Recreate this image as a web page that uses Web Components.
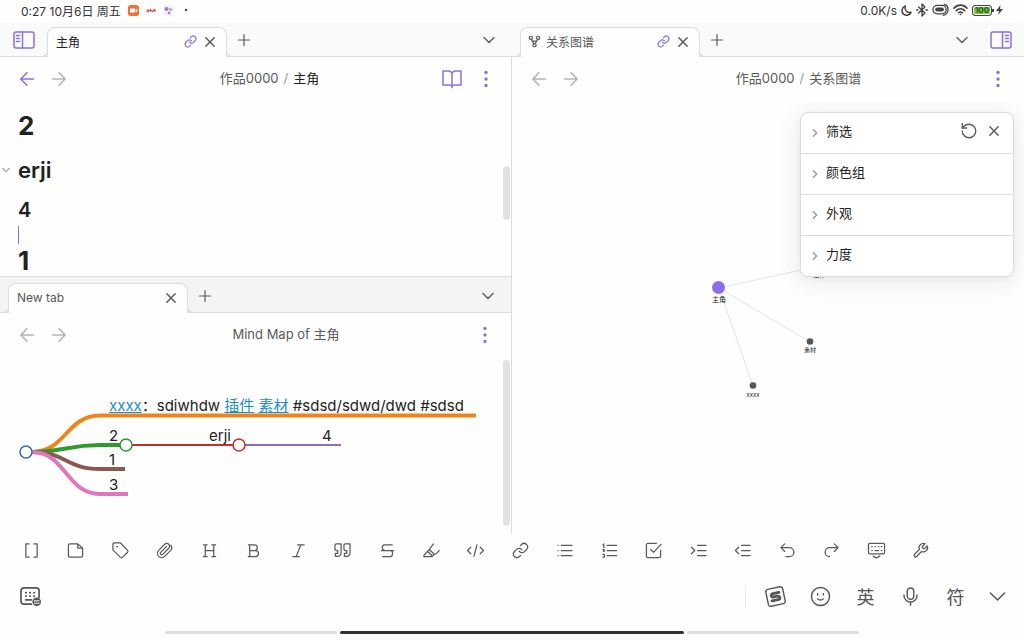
<!DOCTYPE html>
<html lang="zh-CN">
<head>
<meta charset="utf-8">
<title>主角</title>
<style>
  html, body { margin: 0; }
  body { font-family: Inter, "Noto Sans CJK SC", sans-serif; color: #222; background: #fefefe; }
</style>
</head>
<body>
<note-app></note-app>

<template id="t-note-app">
  <style>
    :host { display: flex; flex-direction: column; min-height: 100vh;
      --accent: #8b72dc; --muted: #5a5a5a; --faint: #b4b4b4; --line: #dcdcdc; --page: #fefefe; }
    main { flex: 1; display: grid; grid-template-columns: 1fr 1fr; }
    .left { display: grid; grid-template-rows: 254fr 257fr; border-right: 1px solid var(--line); box-sizing: border-box; min-width: 0; position: relative; }
    .right { display: flex; min-width: 0; }
    work-pane { min-width: 0; }
    .right work-pane { flex: 1; }
    .joined { margin-right: -1px; }
    .lower { border-top: 1px solid var(--line); --strip: #f4f4f4; --strip-height: 36px; }
  </style>
  <status-bar></status-bar>
  <main>
    <div class="left">
      <work-pane class="joined">
        <icon-button slot="start" icon="panelLeft" label="左侧边栏" style="--w:47px;--s:22px;--c:var(--accent);--k:1.5"></icon-button>
        <tab-card slot="tab" linked>主角</tab-card>
        <pane-header slot="header" back book><span>作品0000</span><i>/</i><b>主角</b></pane-header>
        <note-editor></note-editor>
      </work-pane>
      <work-pane class="lower">
        <tab-card slot="tab" style="margin-left:8px" plain>New tab</tab-card>
        <pane-header slot="header"><span>Mind Map of 主角</span></pane-header>
        <mind-map></mind-map>
      </work-pane>
    </div>
    <div class="right">
      <work-pane>
        <tab-card slot="tab" style="margin-left:8px" linked plain><ui-icon name="fork" style="--s:11px"></ui-icon>关系图谱</tab-card>
        <icon-button slot="end" icon="panelRight" label="右侧边栏" style="--w:46px;--s:22px;--c:var(--accent);--k:1.5"></icon-button>
        <pane-header slot="header"><span>作品0000</span><i>/</i><span>关系图谱</span></pane-header>
        <relation-graph></relation-graph>
      </work-pane>
    </div>
  </main>
  <format-toolbar></format-toolbar>
  <ime-bar></ime-bar>
  <gesture-bar></gesture-bar>
</template>

<template id="t-status-bar">
  <style>
    :host { display: flex; align-items: center; justify-content: space-between; height: 20px; padding: 0 21px 2px; font-size: 12px; color: #333; white-space: nowrap; --c: #444; }
    div { display: flex; align-items: center; }
    .battery { position: relative; box-sizing: border-box; width: 20px; height: 11px; border: 1px solid #444; border-radius: 3px; background: #7bc84a; font: 700 8px/9px Inter, sans-serif; text-align: center; box-shadow: inset 0 0 0 1px #fff; color: #245c10; }
    .battery::after { content: ""; position: absolute; right: -3px; top: 3px; width: 2px; height: 3px; background: #444; }
    .apps { gap: 7px; }
    .sys { gap: 4px; }
  </style>
  <div class="apps"><span>0:27 10月6日 周五</span>
    <ui-icon name="camera" style="--s:11px"></ui-icon><ui-icon name="redApp" style="--s:10px"></ui-icon><ui-icon name="dotsApp" style="--s:11px"></ui-icon><ui-icon name="dot" style="--s:8px"></ui-icon></div>
  <div class="sys"><span>0.0K/s</span>
    <ui-icon name="moon" style="--s:11px;--k:1.5"></ui-icon><ui-icon name="bluetooth" style="--s:12px;--k:1.3"></ui-icon><ui-icon name="pill" style="--s:17px;--k:1.3"></ui-icon><ui-icon name="wifi" style="--s:15px;--k:1.7"></ui-icon><span class="battery">100</span><ui-icon name="bolt" style="--s:7px"></ui-icon></div>
</template>

<template id="t-work-pane">
  <style>
    :host { display: flex; flex-direction: column; }
    .strip { display: flex; align-items: flex-end; height: var(--strip-height, 35px); box-sizing: border-box; background: var(--strip, #fafafa); box-shadow: inset 0 -1px var(--line); }
    .grow { flex: 1; }
    .strip icon-button { --h: 34px; }
    ::slotted(icon-button) { --h: 35px; }
    .body { flex: 1; display: grid; position: relative; }
  </style>
  <div class="strip">
    <slot name="start"></slot><slot name="tab"></slot>
    <icon-button icon="plus" label="新建标签页" style="--w:33px;--s:12px;--k:1.2"></icon-button>
    <span class="grow"></span>
    <icon-button icon="down" label="标签页列表" style="--w:32px;--s:12px;--k:1.4"></icon-button>
    <slot name="end"><span style="width:7px"></span></slot>
  </div>
  <slot name="header"></slot>
  <div class="body"><slot></slot></div>
</template>

<template id="t-tab-card">
  <style>
    :host { position: relative; display: flex; align-items: center; box-sizing: border-box; width: 180px; height: 30px; padding: 0 6px 2px 8px; border: 1px solid var(--line); border-bottom: 0; border-radius: 8px 8px 0 0; background: var(--page); font-size: 12px; color: #222; }
    :host([plain]) { color: var(--muted); }
    :host::before, :host::after { content: ""; position: absolute; bottom: 0; width: 6px; height: 6px; border: 1px solid var(--line); border-top: 0; box-sizing: border-box; background: var(--strip, #fafafa); clip-path: inset(0); }
    :host::before { left: -6px; border-left: 0; border-radius: 0 0 6px 0; }
    :host::after { right: -6px; border-right: 0; border-radius: 0 0 0 6px; }
    span { flex: 1; display: flex; align-items: center; gap: 6px; }
    .link { display: none; }
    :host([linked]) .link { display: block; }
    icon-button { --h: 28px; --w: 20px; }
  </style>
  <span><slot></slot></span>
  <icon-button class="link" icon="link" label="已关联" style="--s:13px;--c:var(--accent);--k:1.2"></icon-button>
  <icon-button icon="x" label="关闭" style="--s:10px;--k:1.5"></icon-button>
</template>

<template id="t-pane-header">
  <style>
    :host { display: flex; align-items: center; height: 44px; padding: 0 9px 0 11px; font-size: 13px; color: var(--muted); }
    nav { display: flex; width: 93px; --c: var(--faint); }
    :host([back]) .back { --c: var(--accent); }
    .title { flex: 1; display: flex; align-items: baseline; justify-content: center; gap: 5px; padding-bottom: 3px; white-space: nowrap; }
    ::slotted(i) { color: #999; font-style: normal; }
    ::slotted(b) { color: #222; font-weight: 400; }
    .act { --w: 34px; --c: var(--accent); }
    .book { display: none; }
    :host([book]) .book { display: block; }
  </style>
  <nav><icon-button class="back" icon="back" label="后退" style="--s:14px;--k:1.6"></icon-button><icon-button icon="forward" label="前进" style="--s:14px;--k:1.6"></icon-button></nav>
  <div class="title"><slot></slot></div>
  <icon-button class="act book" icon="book" label="阅读视图" style="--s:20px;--k:1.5"></icon-button>
  <icon-button class="act" icon="more" label="更多选项" style="--s:4px"></icon-button>
</template>

<template id="t-note-editor">
  <style>
    :host { display: block; position: relative; overflow: hidden; height: 0; min-height: 100%; padding: 9px 18px 0; box-sizing: border-box; }
    h1, h2, h3, p { margin: 0; }
    h1 { font: 700 26px/32px Inter, sans-serif; }
    h2 { font: 600 22px/32px Inter, sans-serif; margin: 12px 0 10px; display: flex; align-items: center; }
    h2 icon-button { margin-left: -18px; --w: 12px; --h: 20px; margin-right: 6px; --c: #aaa; }
    h3 { font: 600 20px/28px Inter, sans-serif; }
    p { height: 18px; margin: 2px 0 1px; border-left: 1px solid var(--accent); }
    .thumb { position: absolute; right: 2px; top: 65px; width: 7px; height: 54px; border-radius: 4px; background: #e2e2e2; }
  </style>
  <h1>2</h1>
  <h2><icon-button icon="down" label="折叠" style="--s:8px;--k:1.3"></icon-button>erji</h2>
  <h3>4</h3>
  <p></p>
  <h1>1</h1>
  <span class="thumb"></span>
</template>

<template id="t-mind-map">
  <style>
    :host { display: block; position: relative; overflow: hidden; font-size: 15px; line-height: 20px; color: #222; white-space: nowrap; }
    svg { display: block; }
    span { position: absolute; }
    a { color: #1c8fc9; }
    .thumb { right: 1px; top: 3px; bottom: 7px; width: 7px; border-radius: 4px; background: #e2e2e2; }
  </style>
  <svg width="500" height="150" fill="none" stroke-width="4">
    <path stroke="#f08418" d="M32 95C66 95 66 58.500 100 58.500H476"/>
    <path stroke="#2f9a2f" d="M32 95C66 95 66 88 100 88H120"/>
    <path stroke="#8a584c" d="M32 95C66 95 66 112 100 112H125"/>
    <path stroke="#de77c0" d="M32 95C66 95 66 137 100 137H128"/>
    <path stroke="#c62d2d" stroke-width="2" d="M132 88H233"/>
    <path stroke="#946bb5" stroke-width="2" d="M245 88H341"/>
    <g stroke-width="1.500" fill="#fff"><circle cx="26" cy="95" r="6" stroke="#2c6ea8"/><circle cx="126" cy="88" r="6" stroke="#2f9a2f"/><circle cx="239" cy="88" r="6" stroke="#c62d2d"/></g>
  </svg>
  <span style="left:109px;top:39px"><a href="#xxxx">xxxx</a>：sdiwhdw <a href="#plugin">插件</a> <a href="#material">素材</a> #sdsd/sdwd/dwd #sdsd</span>
  <span style="left:109px;top:69px">2</span>
  <span style="left:209px;top:69px">erji</span>
  <span style="left:322px;top:69px">4</span>
  <span style="left:109px;top:93px">1</span>
  <span style="left:109px;top:118px">3</span>
  <span class="thumb"></span>
</template>

<template id="t-relation-graph">
  <style>
    :host { display: block; position: relative; overflow: hidden; }
    svg { position: absolute; left: 0; top: 0; }
    span { position: absolute; width: 40px; margin-left: -20px; text-align: center; font-size: 6px; line-height: 8px; color: #222; }
    graph-settings { position: absolute; right: 10px; top: 11px; width: 214px; }
  </style>
  <svg width="340" height="320"><path d="M207 187L307 165M207 187L298 241M207 187L241 285" stroke="#e4e4e4"/><circle cx="206.500" cy="186.500" r="6.500" fill="#8a6fe8"/><g fill="#555"><circle cx="307" cy="164" r="3.300"/><circle cx="298" cy="240.500" r="3.300"/><circle cx="241" cy="284.500" r="3.300"/></g></svg>
  <span style="left:207px;top:195px;font-size:7px">主角</span>
  <span style="left:298px;top:245px">素材</span>
  <span style="left:241px;top:290px">xxxx</span>
  <span style="left:307px;top:170px">插件</span>
  <graph-settings></graph-settings>
</template>

<template id="t-graph-settings">
  <style>
    :host { display: block; box-sizing: border-box; border: 1px solid var(--line); border-radius: 8px; background: #fff; box-shadow: 0 4px 28px rgba(0,0,0,.09), 0 2px 6px rgba(0,0,0,.04); overflow: hidden; }
    div { display: flex; align-items: center; height: 40px; padding-right: 7px; }
    div + div { border-top: 1px solid var(--line); }
    .row { flex: 1; display: flex; align-items: center; gap: 7px; height: 100%; padding: 0 0 5px 10px; border: 0; background: none; font: 13px Inter, "Noto Sans CJK SC", sans-serif; color: #222; }
    .row ui-icon { --s: 8px; --c: #999; margin-top: 4px; --k: 1.4; }
    icon-button { --w: 25px; --h: 36px; }
    div { align-items: flex-start; }
  </style>
  <div><button class="row" aria-expanded="false"><ui-icon name="right"></ui-icon>筛选</button><icon-button icon="reset" label="恢复默认" style="--s:18px;--k:1.3"></icon-button><icon-button icon="x" label="关闭" style="--s:10px;--k:1.4"></icon-button></div>
  <div><button class="row" aria-expanded="false"><ui-icon name="right"></ui-icon>颜色组</button></div>
  <div><button class="row" aria-expanded="false"><ui-icon name="right"></ui-icon>外观</button></div>
  <div><button class="row" aria-expanded="false"><ui-icon name="right"></ui-icon>力度</button></div>
</template>

<template id="t-format-toolbar">
  <style>
    :host { display: grid; grid-auto-flow: column; grid-auto-columns: 1fr; height: 36px; padding: 0 81px 0 9px; --h: 34px; --w: 100%; --s: 17px; --k: 1.25; }
  </style>
</template>

<template id="t-ime-bar">
  <style>
    :host { display: flex; align-items: center; height: 56px; padding: 0 8px 2px; --h: 44px; --w: 45px; --c: #55555a; --k: 1.4; border-top: 1px solid #fafafa; box-sizing: border-box; }
    .grow { flex: 1; }
    hr { width: 1px; height: 24px; border: 0; margin: 0 7px; background: #ececec; }
    button { width: 45px; height: 44px; padding: 0 0 2px; border: 0; background: none; color: #55555a; font: 18px "Noto Sans CJK SC", sans-serif; }
  </style>
  <icon-button icon="keyboardSwap" label="切换键盘" style="--s:21px;--k:1.7"></icon-button>
  <span class="grow"></span><hr>
  <icon-button icon="sogou" label="输入法" style="--s:21px"></icon-button>
  <icon-button icon="smile" label="表情" style="--s:19px"></icon-button>
  <button>英</button>
  <icon-button icon="mic" label="语音" style="--s:15px"></icon-button>
  <button>符</button>
  <icon-button icon="down" label="收起键盘" style="--s:17px;--w:38px;--k:1.5"></icon-button>
</template>

<template id="t-gesture-bar">
  <style>
    :host { display: flex; align-items: center; gap: 3px; height: 15px; padding: 0 16.1%; }
    i { flex: 1; height: 3px; border-radius: 2px; background: #dedede; }
    .on { flex: 2; background: #333; }
  </style>
  <i></i><i class="on"></i><i></i>
</template>

<script>
  // name: [viewBox width, viewBox height, markup]
  const ICONS = {
    panelLeft: [22, 18, '<rect x="1" y="1" width="20" height="16" rx="2"/><path d="M9.500 1v16M3.500 4.500h3M3.500 7.500h3M3.500 10.500h3"/>'],
    panelRight: [22, 18, '<rect x="1" y="1" width="20" height="16" rx="2"/><path d="M12.500 1v16M15.500 4.500h3M15.500 7.500h3M15.500 10.500h3"/>'],
    plus: [12, 12, '<path d="M6 .5v11M.5 6h11"/>'],
    down: [12, 12, '<path d="M1 3.500l5 5 5-5"/>'],
    right: [12, 12, '<path d="M3.500 1l5 5-5 5"/>'],
    x: [12, 12, '<path d="M1 1l10 10M11 1L1 11"/>'],
    back: [14, 14, '<path d="M13.500 7H1M7 .8L.8 7 7 13.200"/>'],
    forward: [14, 14, '<path d="M.5 7H13M7 .8L13.200 7 7 13.200"/>'],
    book: [20, 18, '<path d="M10 3.500v14M10 3C9 1.500 8 1 6.500 1H1v14h6c1.500 0 2.500.5 3 1.500.5-1 1.500-1.500 3-1.500h6V1h-5.500C12 1 11 1.500 10 3z"/>'],
    more: [4, 18, '<g fill="currentColor" stroke="none"><circle cx="2" cy="2.500" r="1.700"/><circle cx="2" cy="9" r="1.700"/><circle cx="2" cy="15.500" r="1.700"/></g>'],
    link: [24, 24, '<path d="M10 13a5 5 0 0 0 7.540.54l3-3a5 5 0 0 0-7.070-7.070l-1.720 1.710"/><path d="M14 11a5 5 0 0 0-7.540-.54l-3 3a5 5 0 0 0 7.070 7.070l1.710-1.710"/>'],
    fork: [24, 24, '<circle cx="12" cy="20" r="3.500"/><circle cx="4" cy="4" r="3.500"/><circle cx="20" cy="4" r="3.500"/><path d="M5 7.500L10.500 16.500M19 7.500L13.500 16.500M7 11h10"/>'],
    reset: [24, 24, '<path d="M3 12a9 9 0 1 0 9-9 9.750 9.750 0 0 0-6.740 2.740L3 8"/><path d="M3 2v6h6"/>'],
    brackets: [18, 18, '<path d="M6.500 2H3v14h3.500M11.500 2H15v14h-3.500"/>'],
    file: [18, 18, '<path d="M11.500 2H3A1.500 1.500 0 0 0 1.500 3.500v11A1.500 1.500 0 0 0 3 16h12a1.500 1.500 0 0 0 1.500-1.500V6.500zM11.500 2v4.500h5"/>'],
    tag: [18, 18, '<path d="M1 2v6.300l8 8a1.500 1.500 0 0 0 2 0l5.500-5.500a1.500 1.500 0 0 0 0-2L9 1H2z"/><path d="M5 5h.8"/>'],
    clip: [24, 24, '<path d="M21.440 11.050l-9.190 9.190a6 6 0 0 1-8.490-8.490l8.570-8.570A4 4 0 1 1 18 8.840l-8.590 8.570a2 2 0 0 1-2.830-2.830l8.490-8.480M21.440 11.050c1-1.200 1.300-4-.4-6.400"/>'],
    heading: [18, 18, '<path d="M4.500 3v12.500M13.500 3v12.500M4.500 9h9M2.500 3h4M11.500 3h4M2.500 15.500h4M11.500 15.500h4"/>'],
    bold: [18, 18, '<path d="M5 3v12.500M3.500 3H10a3 3 0 0 1 0 6H5M10 9h1a3 3 0 0 1 0 6.500H3.500"/>'],
    italic: [18, 18, '<path d="M8 3h7M3 15.500h7M11.500 3l-5 12.500"/>'],
    quote: [18, 18, '<path d="M7.500 2H2.500A1.500 1.500 0 0 0 1 3.500v4A1.500 1.500 0 0 0 2.500 9H4v3H1.500v3c4 1 6-1 6-4zM17 2H12A1.500 1.500 0 0 0 10.500 3.500v4A1.500 1.500 0 0 0 12 9h1.500v3H11v3c4 1 6-1 6-4z"/>'],
    strike: [18, 18, '<path d="M14 3H6a2.500 2.500 0 0 0-2.500 2.500C3.500 7.500 4.500 9 7 9M2.500 9h13M13 9c2.500 2 1.500 6.500-1.500 6.500H4"/>'],
    marker: [18, 18, '<path d="M11 2L6.500 8 1 14v1.500h8.500l1.500-2M6.500 8L12 13c1.500.3 4.500-3 5-4M5 10l4.500 4.500"/>'],
    code: [18, 18, '<path d="M4 5.500L.5 9 4 12.500M14 5.500L17.500 9 14 12.500M10.500 3l-3 12"/>'],
    bullets: [18, 18, '<path d="M5.500 3.500H17M5.500 9H17M5.500 14.500H17"/><path stroke="#aaa" d="M1.500 3.500H3M1.500 9H3M1.500 14.500H3"/>'],
    numbers: [18, 18, '<path d="M6.500 3.500H16.500M6.500 9H16.500M6.500 14.500H16.500M3 2v4M2 3h1M2 8h1.500L2.500 10h1M2 13h1.500v3H2"/>'],
    check: [18, 18, '<path d="M16.500 8.500v6.500a1.500 1.500 0 0 1-1.500 1.500H3A1.500 1.500 0 0 1 1.500 15V3A1.500 1.500 0 0 1 3 1.500h9M6 8l3 3 8-8.500"/>'],
    indent: [18, 18, '<path d="M8 3.500H17M8 9H17M8 14.500H17M1.500 5.500L5 9 1.500 12.500"/>'],
    outdent: [18, 18, '<path d="M8 3.500H17M8 9H17M8 14.500H17M5 5.500L1.500 9 5 12.500"/>'],
    undo: [18, 18, '<path d="M6 2L2 6 6 10M2 6H11a4.700 4.700 0 0 1 0 9.500H7.500"/>'],
    redo: [18, 18, '<path d="M12 2L16 6 12 10M16 6H7a4.700 4.700 0 0 0 0 9.500"/>'],
    keyboard: [18, 18, '<rect x=".5" y="1.500" width="17" height="11" rx="1.500"/><path d="M4 5h.5M7.500 5h.5M11 5h.5M14 5h.5M4 9h.5M7.500 9h3.500M14 9h.5M5.500 15L9 17l3.500-2"/>'],
    wrench: [24, 24, '<path d="M14.700 6.300a1 1 0 0 0 0 1.400l1.600 1.600a1 1 0 0 0 1.400 0l3.770-3.770a6 6 0 0 1-7.940 7.940l-6.910 6.910a2.120 2.120 0 0 1-3-3l6.910-6.910a6 6 0 0 1 7.940-7.940z"/>'],
    keyboardSwap: [22, 20, '<path d="M12 18H4a3 3 0 0 1-3-3V4a3 3 0 0 1 3-3h13a3 3 0 0 1 3 3v7M6 6h.5M10.300 6h.5M14.500 6h.5M6 9.500h.5M10.300 9.500h.5M14.500 9.500h.5M6 13.500h6"/><circle cx="17.500" cy="15.500" r="4.500" fill="currentColor" stroke="none"/><path stroke="#fff" style="stroke-width:1px" d="M15 14.500h5M15 17h5"/>'],
    sogou: [22, 22, '<g transform="rotate(-12 11 11)"><rect x="2" y="2" width="18" height="18" rx="2.500"/><path style="stroke-width:2.800px" d="M15.500 7.500H9c-3 0-3 3.500 0 3.500h4c3 0 3 3.800 0 3.800H6.500"/></g>'],
    smile: [20, 20, '<circle cx="10" cy="10" r="9.500"/><path d="M7 7v1.500M13 7v1.500M7 12.500c1.500 1.500 4.500 1.500 6 0"/>'],
    mic: [16, 20, '<rect x="4.500" y="1" width="7" height="12" rx="3.500"/><path d="M1 8.500c0 10 14 10 14 0M8 16v3.500"/>'],
    camera: [11, 11, '<rect width="11" height="11" rx="2.500" fill="#ee7138" stroke="none"/><path fill="#fff" stroke="none" d="M2 3.500h5v4H2zM7.300 5l2-1.200v3.400l-2-1.200z"/>'],
    redApp: [10, 11, '<path stroke="#cc4a4a" d="M.5 6h2M2 4.500V7M3.500 5.500h2M4.500 4.500v2M6.500 6.500l2-2M9 4.500V6.500"/>'],
    dotsApp: [11, 11, '<rect width="11" height="11" rx="3" fill="#f4f2f8" stroke="none"/><g stroke="none"><circle cx="3.500" cy="4" r="2" fill="#9a7add"/><circle cx="7.500" cy="4.500" r="1.700" fill="#9bc3a8"/><circle cx="6" cy="8" r="1.300" fill="#c06ad0"/></g>'],
    dot: [8, 8, '<circle cx="5" cy="4" r="1.200" fill="currentColor" stroke="none"/>'],
    moon: [12, 12, '<path d="M4.500 1C.5 3-.2 8 3.200 10.300 6 12.200 9.700 11 11 8 7 9 3.500 6 4.500 1z"/>'],
    bluetooth: [12, 14, '<path d="M2.500 4L9 10 6 13V1l3 3-6.500 6M.5 7H2M10 7h1.500"/>'],
    pill: [18, 14, '<rect x="1" y="2.500" width="14" height="9" rx="4.500"/><path style="stroke-width:4px" d="M5.500 7h5"/><path d="M13 1.500c5.500 1.500 5.500 9.500-1 11.500"/>'],
    wifi: [16, 12, '<path d="M1 4.500c4-4.300 10-4.300 14 0M3.500 7c2.500-2.600 6.500-2.600 9 0M6 9.300c1-1 3-1 4 0"/><circle cx="8" cy="11" r="1" fill="currentColor" stroke="none"/>'],
    bolt: [7, 12, '<path fill="currentColor" stroke="none" d="M4.500 1L0 7h3l-1 4 5-6H4z"/>']
  };

  class UiIcon extends HTMLElement {
    connectedCallback() {
      if (this.shadowRoot) return;
      const [w, h, body] = ICONS[this.getAttribute('name')];
      this.attachShadow({ mode: 'open' }).innerHTML = `<style>
        :host { display: inline-flex; flex: none; color: var(--c, var(--muted, #5a5a5a)); }
        svg { display: block; width: var(--s, 16px); height: auto; overflow: visible; }
        path, rect, circle { vector-effect: non-scaling-stroke; }
        </style><svg viewBox="0 0 ${w} ${h}" fill="none" stroke="currentColor" style="stroke-width:var(--k,1.2)" stroke-linecap="round" stroke-linejoin="round" aria-hidden="true">${body}</svg>`;
    }
  }
  customElements.define('ui-icon', UiIcon);

  class IconButton extends HTMLElement {
    connectedCallback() {
      if (this.shadowRoot) return;
      this.attachShadow({ mode: 'open' }).innerHTML = `<style>
        :host { display: block; flex: none; width: var(--w, 32px); height: var(--h, 32px); }
        button { display: flex; align-items: center; justify-content: center; width: 100%; height: 100%; margin: 0; padding: 0; border: 0; background: none; }
        </style><button aria-label="${this.getAttribute('label')}"><ui-icon name="${this.getAttribute('icon')}"></ui-icon></button>`;
    }
  }
  customElements.define('icon-button', IconButton);

  class TemplateElement extends HTMLElement {
    connectedCallback() {
      if (this.shadowRoot) return;
      const source = document.getElementById('t-' + this.localName);
      this.attachShadow({ mode: 'open' }).append(source.content.cloneNode(true));
      this.ready();
    }
    ready() {}
  }

  customElements.define('format-toolbar', class extends TemplateElement {
    ready() {
      const tools = { brackets: '内部链接', file: '嵌入', tag: '标签', clip: '附件', heading: '标题', bold: '粗体', italic: '斜体', quote: '引用', strike: '删除线', marker: '高亮', code: '代码', link: '链接', bullets: '无序列表', numbers: '有序列表', check: '任务', indent: '增加缩进', outdent: '减少缩进', undo: '撤销', redo: '重做', keyboard: '收起键盘', wrench: '设置' };
      for (const [icon, label] of Object.entries(tools)) {
        const button = document.createElement('icon-button');
        button.setAttribute('icon', icon);
        button.setAttribute('label', label);
        this.shadowRoot.append(button);
      }
    }
  });

  for (const name of ['status-bar', 'tab-card', 'pane-header', 'note-editor', 'mind-map', 'graph-settings', 'relation-graph', 'work-pane', 'ime-bar', 'gesture-bar', 'note-app'])
    customElements.define(name, class extends TemplateElement {});
</script>
</body>
</html>
